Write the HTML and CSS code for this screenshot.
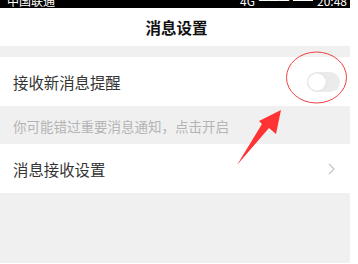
FILE: index.html
```html
<!DOCTYPE html>
<html lang="zh-CN">
<head>
<meta charset="utf-8">
<link rel="stylesheet" href="styles.css">
</head>
<body>
<div class="screen">
  <div class="status">
    <span class="carrier">中国联通</span>
    <span class="status-right">4G <span class="sig">▂▄▆</span> <span class="batt"></span> 20:48</span>
  </div>
  <div class="titlebar">消息设置</div>
  <div class="gap-top"></div>
  <div class="row">
    <span class="label">接收新消息提醒</span>
    <span class="toggle"><span class="knob"></span></span>
  </div>
  <div class="hint">你可能错过重要消息通知，点击开启</div>
  <div class="row">
    <span class="label">消息接收设置</span>
    <svg class="chev" width="7" height="12" viewBox="0 0 7 12"><path d="M1 1 L6 6 L1 11" fill="none" stroke="#c4c4c4" stroke-width="1.2"/></svg>
  </div>
  <div class="rest"></div>
  <svg class="annot" width="358" height="264" viewBox="0 0 358 264">
    <ellipse cx="316.5" cy="77.5" rx="30" ry="25.5" fill="none" stroke="#f04040" stroke-width="1"/>
    <polygon points="281,110 276,134 269,128 237,165 262,124 259,121" fill="#ff3333"/>
  </svg>
</div>
</body>
</html>
```
FILE: styles.css
```css
* { box-sizing: border-box; }
html, body { margin: 0; padding: 0; background: #fff; }
body { font-family: "Noto Sans CJK SC", "Noto Sans", sans-serif; }
.screen {
  position: relative;
  width: 350px;
  height: 263px;
  display: flex;
  flex-direction: column;
  background: #f0f0f0;
}
.status {
  height: 8px;
  background: #000;
  color: #fff;
  overflow: hidden;
  display: flex;
  justify-content: space-between;
  font-size: 12px;
  line-height: 12px;
  padding: 0 3px 0 7px;
}
.status span { margin-top: -5px; }
.status-right { display: flex; gap: 4px; }
.sig { font-size: 10px; }
.batt {
  display: inline-block;
  width: 20px; height: 9px;
  border: 1px solid #fff;
  margin-top: -3px !important;
}
.titlebar {
  height: 38px;
  background: #fff;
  display: flex;
  align-items: center;
  justify-content: center;
  font-size: 15.5px;
  font-weight: bold;
  color: #111;
  padding-left: 3px;
}
.gap-top { height: 11px; }
.row {
  height: 49px;
  background: #fff;
  display: flex;
  align-items: center;
  justify-content: space-between;
  padding: 0 10px 0 13px;
}
.label { font-size: 15.4px; color: #333; }
.toggle {
  width: 33px;
  height: 20px;
  border-radius: 10px;
  background: #ebebeb;
  position: relative;
  display: flex;
  align-items: center;
  padding-left: 1px;
}
.knob {
  width: 18px; height: 18px;
  border-radius: 50%;
  background: #fff;
  box-shadow: 0 0 1px rgba(0,0,0,0.25);
}
.hint {
  height: 38px;
  display: flex;
  align-items: center;
  padding-left: 13px;
  font-size: 13.5px;
  color: #b4b4b4;
  padding-top: 2px;
}
.chev { margin-right: 5px; }
.rest { flex: 1; }
.annot { position: absolute; left: 0; top: 0; pointer-events: none; }
```
